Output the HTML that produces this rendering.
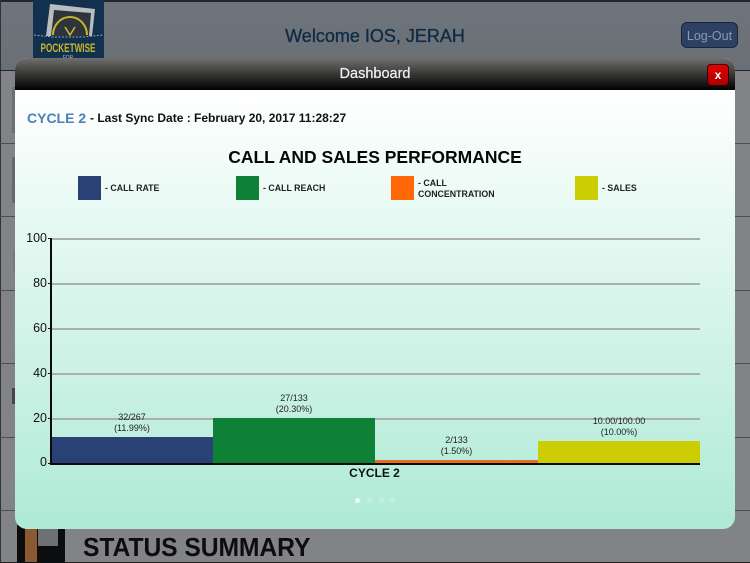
<!DOCTYPE html>
<html>
<head>
<meta charset="utf-8">
<style>
html,body{margin:0;padding:0;width:750px;height:563px;overflow:hidden;background:#828387;font-family:"Liberation Sans",sans-serif}
.abs{position:absolute}
#page{position:relative;width:750px;height:563px;overflow:hidden}
.line{position:absolute;left:0;width:750px;height:1px;background:#4c4e52}
.t{position:absolute;white-space:nowrap}
.c{text-align:center}
.lg{position:absolute;top:176px;width:23px;height:24px}
.lt{position:absolute;font-size:8.8px;font-weight:bold;color:#1c2024;line-height:10.5px}
.yl{position:absolute;font-size:12.5px;color:#111;text-align:right;width:22px;left:25px;line-height:15px}
.gr{position:absolute;left:51px;width:649px;height:2px;background:#a9b0ae}
.bl{position:absolute;font-size:9px;color:#222;text-align:center;line-height:10.5px}
</style>
</head>
<body>
<div id="page">
  <div class="abs" style="left:0;top:0;width:750px;height:70px;background:linear-gradient(#6f757c,#696f75)"></div>
  <div class="abs" style="left:0;top:0;width:750px;height:2px;background:#23272c"></div>
  <div class="abs" style="left:0;top:0;width:1px;height:563px;background:#2f3338"></div>
  <div class="line" style="top:70px;background:#22262b"></div>
  <div class="line" style="top:143px"></div>
  <div class="line" style="top:216px"></div>
  <div class="line" style="top:290px"></div>
  <div class="line" style="top:363px"></div>
  <div class="line" style="top:437px"></div>
  <div class="line" style="top:510px"></div>
  <div class="abs" style="left:0;top:562px;width:750px;height:1px;background:#222"></div>

  <!-- logo -->
  <svg class="abs" style="left:33px;top:0" width="71" height="60" viewBox="0 0 71 60">
    <rect width="71" height="60" fill="#12314f"/>
    <path d="M17 4 L62 9 L59 36 L13 36 Z" fill="#b9bdc2"/>
    <path d="M21 10 L58 13 L56 36 L18 36 Z" fill="#2e343c"/>
    <path d="M20 35 A17 18 0 0 1 54 35" fill="none" stroke="#c9b52c" stroke-width="2"/>
    <path d="M32 27 L37 35 L42 27" fill="none" stroke="#c9b52c" stroke-width="1.6"/>
    <path d="M0 35 L20 37 L50 37 L71 35 L71 60 L0 60 Z" fill="#12314f"/>
    <path d="M1 35 L20 37 L50 37 L70 35" fill="none" stroke="#9aa3ad" stroke-width="1" stroke-dasharray="2 1.5"/>
    <text x="35" y="52" text-anchor="middle" font-family="Liberation Sans" font-weight="bold" font-size="11.5" fill="#c9b52c" textLength="55" lengthAdjust="spacingAndGlyphs">POCKETWISE</text>
    <text x="35" y="59" text-anchor="middle" font-family="Liberation Sans" font-size="5" fill="#bbb">FOR</text>
  </svg>

  <div class="t c" style="left:250px;width:250px;top:26px;font-size:18px;line-height:21px;color:#0f2b45;-webkit-text-stroke:.35px #0f2b45">Welcome IOS, JERAH</div>

  <div class="abs" style="left:681px;top:22px;width:57px;height:26px;box-sizing:border-box;border:1px solid #1a2538;border-radius:6px;background:#2d4164;color:#8e9aa8;font-size:12.5px;line-height:26px;text-align:center">Log-Out</div>

  <!-- side marks -->
  <div class="abs" style="left:12px;top:87px;width:3px;height:46px;background:#6d6f73"></div>
  <div class="abs" style="left:12px;top:157px;width:3px;height:46px;background:#66686c"></div>
  <div class="abs" style="left:13px;top:250px;width:2px;height:22px;background:#77797d"></div>
  <div class="abs" style="left:12px;top:388px;width:3px;height:16px;background:#4a4444"></div>

  <!-- bottom icon -->
  <div class="abs" style="left:17px;top:525px;width:48px;height:38px;background:#0c0d0f"></div>
  <div class="abs" style="left:25px;top:525px;width:12px;height:37px;background:#8c5a30"></div>
  <div class="abs" style="left:38px;top:525px;width:20px;height:21px;background:#6f7073"></div>
  <div class="t" style="left:83px;top:532px;font-size:26px;line-height:30px;color:#0d0d0f;font-weight:bold;letter-spacing:-.1px;transform-origin:0 0;transform:scaleX(.95)">STATUS SUMMARY</div>

  <!-- modal -->
  <div class="abs" style="left:15px;top:58px;width:720px;height:471px;border-radius:12px;overflow:hidden;background:linear-gradient(#fff 32px,#aeead6 100%)">
    <div class="abs" style="left:0;top:0;width:720px;height:32px;background:linear-gradient(#706f6d,#000 100%)"></div>
  </div>
  <div class="t c" style="left:15px;width:720px;top:66px;font-size:14.5px;line-height:17px;color:#f2f2f2;-webkit-text-stroke:.2px #f2f2f2">Dashboard</div>
  <div class="abs" style="left:707px;top:64px;width:22px;height:22px;box-sizing:border-box;border:1px solid #3b0000;border-radius:4px;background:linear-gradient(#e40000,#a80000);color:#fff;font-size:12px;font-weight:bold;line-height:21px;text-align:center">x</div>

  <div class="t" style="left:27px;top:110px;font-size:14px;line-height:16px;font-weight:bold;color:#4c81b4">CYCLE 2</div>
  <div class="t" style="left:90px;top:111px;font-size:12px;line-height:14px;font-weight:bold;color:#111">- Last Sync Date : February 20, 2017 11:28:27</div>

  <div class="t c" style="left:15px;width:720px;top:147px;font-size:17.5px;line-height:20px;font-weight:bold;color:#060606">CALL AND SALES PERFORMANCE</div>

  <div class="lg" style="left:78px;background:#2a4175"></div>
  <div class="lt" style="left:105px;top:183px">- CALL RATE</div>
  <div class="lg" style="left:236px;background:#0f8137"></div>
  <div class="lt" style="left:263px;top:183px">- CALL REACH</div>
  <div class="lg" style="left:391px;background:#ff6707"></div>
  <div class="lt" style="left:418px;top:178px">- CALL<br>CONCENTRATION</div>
  <div class="lg" style="left:575px;background:#cdcd03"></div>
  <div class="lt" style="left:602px;top:183px">- SALES</div>

  <!-- chart -->
  <div class="gr" style="top:238px"></div>
  <div class="gr" style="top:283px"></div>
  <div class="gr" style="top:328px"></div>
  <div class="gr" style="top:373px"></div>
  <div class="gr" style="top:418px"></div>

  <div class="yl" style="top:231px">100</div>
  <div class="yl" style="top:276px">80</div>
  <div class="yl" style="top:321px">60</div>
  <div class="yl" style="top:366px">40</div>
  <div class="yl" style="top:411px">20</div>
  <div class="yl" style="top:455px">0</div>

  <div class="abs" style="left:48px;top:238px;width:3px;height:1px;background:#111"></div>
  <div class="abs" style="left:48px;top:283px;width:3px;height:1px;background:#111"></div>
  <div class="abs" style="left:48px;top:328px;width:3px;height:1px;background:#111"></div>
  <div class="abs" style="left:48px;top:373px;width:3px;height:1px;background:#111"></div>
  <div class="abs" style="left:48px;top:418px;width:3px;height:1px;background:#111"></div>
  <div class="abs" style="left:48px;top:463px;width:3px;height:1px;background:#111"></div>

  <div class="abs" style="left:51px;top:437px;width:162px;height:26px;background:#2a4175"></div>
  <div class="abs" style="left:213px;top:418px;width:162px;height:45px;background:#0f8137"></div>
  <div class="abs" style="left:375px;top:460px;width:163px;height:3px;background:#e56f1c"></div>
  <div class="abs" style="left:538px;top:441px;width:162px;height:22px;background:#cdcd03"></div>

  <div class="abs" style="left:50px;top:238px;width:2px;height:227px;background:#0a0a0a"></div>
  <div class="abs" style="left:50px;top:463px;width:650px;height:2px;background:#0a0a0a"></div>

  <div class="bl" style="left:51px;width:162px;top:412px">32/267<br>(11.99%)</div>
  <div class="bl" style="left:213px;width:162px;top:393px">27/133<br>(20.30%)</div>
  <div class="bl" style="left:375px;width:163px;top:435px">2/133<br>(1.50%)</div>
  <div class="bl" style="left:538px;width:162px;top:416px">10.00/100.00<br>(10.00%)</div>

  <div class="t c" style="left:50px;width:649px;top:466px;font-size:12px;line-height:14px;font-weight:bold;color:#111">CYCLE 2</div>

  <div class="abs" style="left:355px;top:498px;width:5px;height:5px;border-radius:50%;background:#f4fbf8"></div>
  <div class="abs" style="left:367px;top:498px;width:5px;height:5px;border-radius:50%;background:#c4f0e2"></div>
  <div class="abs" style="left:379px;top:498px;width:5px;height:5px;border-radius:50%;background:#c4f0e2"></div>
  <div class="abs" style="left:390px;top:498px;width:5px;height:5px;border-radius:50%;background:#c4f0e2"></div>
</div>
</body>
</html>
